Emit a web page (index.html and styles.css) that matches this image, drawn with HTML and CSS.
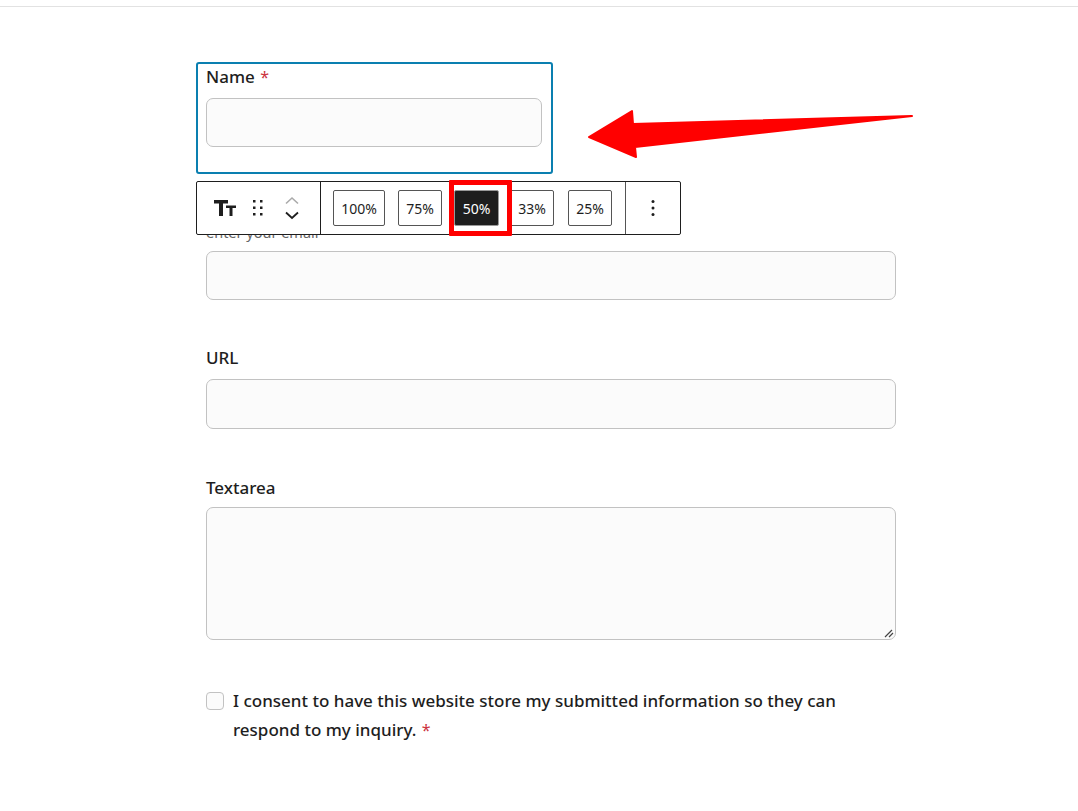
FILE: index.html
```html
<!DOCTYPE html>
<html lang="en">
<head>
    <meta charset="UTF-8">
    <title>Form block</title>
    <link rel="stylesheet" href="styles.css">
</head>
<body>
<div class="top-line"></div>

<div class="form">
    <div class="field field-selected">
        <label class="label">Name <span class="req">*</span></label>
        <div class="input"></div>
    </div>

    <div class="field field-email">
        <div class="hint">enter your email</div>
        <div class="input"></div>
    </div>

    <div class="field field-url">
        <label class="label">URL</label>
        <div class="input input-url"></div>
    </div>

    <div class="field field-textarea">
        <label class="label">Textarea</label>
        <div class="textarea">
            <svg class="grip" width="10" height="10" viewBox="0 0 10 10">
                <path d="M1 9 L8 2 M5 9 L9 5" stroke="#444" stroke-width="1.200" fill="none"/>
            </svg>
        </div>
    </div>

    <div class="consent">
        <span class="checkbox"></span>
        <p class="consent-text">I consent to have this website store my submitted information so they can respond to my inquiry. <span class="req">*</span></p>
    </div>
</div>

<div class="toolbar">
    <div class="tool-group tool-left">
        <svg class="icon-type" width="24" height="20" viewBox="0 0 24 20">
            <path d="M1 2 H15 V5.500 H10 V18 H6 V5.500 H1 Z" fill="#1e1e1e"/>
            <path d="M13 7.500 H23 V10 H19.500 V18 H16.500 V10 H13 Z" fill="#1e1e1e"/>
        </svg>
        <svg class="icon-drag" width="12" height="18" viewBox="0 0 12 18">
            <g fill="#1e1e1e">
                <rect x="1" y="1" width="2.500" height="2.500"/>
                <rect x="8" y="1" width="2.500" height="2.500"/>
                <rect x="1" y="7.500" width="2.500" height="2.500"/>
                <rect x="8" y="7.500" width="2.500" height="2.500"/>
                <rect x="1" y="14" width="2.500" height="2.500"/>
                <rect x="8" y="14" width="2.500" height="2.500"/>
            </g>
        </svg>
        <div class="movers">
            <svg width="16" height="9" viewBox="0 0 16 9"><path d="M2 7.500 L8 2 L14 7.500" stroke="#aaa" stroke-width="1.600" fill="none"/></svg>
            <svg width="16" height="9" viewBox="0 0 16 9"><path d="M2 1.500 L8 7 L14 1.500" stroke="#1e1e1e" stroke-width="1.800" fill="none"/></svg>
        </div>
    </div>
    <div class="tool-group tool-widths">
        <button class="width-btn btn-100">100%</button>
        <button class="width-btn btn-75">75%</button>
        <button class="width-btn btn-50 active">50%</button>
        <button class="width-btn btn-33">33%</button>
        <button class="width-btn btn-25">25%</button>
    </div>
    <div class="tool-group tool-more">
        <svg width="4" height="18" viewBox="0 0 4 18">
            <circle cx="2" cy="2.500" r="1.500" fill="#1e1e1e"/>
            <circle cx="2" cy="9" r="1.500" fill="#1e1e1e"/>
            <circle cx="2" cy="15.500" r="1.500" fill="#1e1e1e"/>
        </svg>
    </div>
</div>

<div class="highlight"></div>

<svg class="arrow" width="330" height="56" viewBox="0 0 330 56">
    <path d="M3 29 L46 3 L47 16 L326 8 L49 39 L50 49 Z" fill="#ff0000" stroke="#ff0000" stroke-width="2" stroke-linejoin="round"/>
</svg>
</body>
</html>
```

FILE: styles.css
```css
* {
    box-sizing: border-box;
}

body {
    margin: 0;
    background: #fff;
    font-family: "Noto Sans", "Open Sans", sans-serif;
    color: #1e1e1e;
    height: 811px;
    overflow: hidden;
}

.top-line {
    height: 7px;
    border-bottom: 1px solid #e2e2e2;
}

.form {
    width: 690px;
    margin-left: 206px;
    padding-top: 55px;
}

.label {
    display: block;
    font-size: 17px;
    font-weight: 500;
    line-height: 24px;
    margin-bottom: 9px;
}

.req {
    color: #cc3340;
    font-weight: 400;
    font-size: 16px;
    margin-left: 1px;
}

.input {
    height: 49px;
    background: #fbfbfb;
    border: 1px solid #c2c2c2;
    border-radius: 7px;
}

.input-url {
    height: 50px;
}

.field-selected {
    width: 357px;
    height: 112px;
    margin-left: -10px;
    padding: 1px 9px 1px 8px;
    border: 2px solid #0a7fb0;
    border-radius: 3px;
}

.field-email {
    margin-top: 48px;
}

.hint {
    font-size: 14.500px;
    line-height: 20px;
    color: #666;
    margin-bottom: 9px;
}

.field-url {
    margin-top: 46px;
}

.field-textarea {
    margin-top: 47px;
}

.field-textarea .label {
    margin-bottom: 7px;
}

.textarea {
    position: relative;
    height: 133px;
    background: #fbfbfb;
    border: 1px solid #c2c2c2;
    border-radius: 7px;
}

.grip {
    position: absolute;
    right: 1px;
    bottom: 1px;
}

.consent {
    display: flex;
    margin-top: 46px;
    gap: 9px;
}

.checkbox {
    flex: none;
    width: 18px;
    height: 18px;
    margin-top: 6px;
    background: #fbfbfb;
    border: 1px solid #c2c2c2;
    border-radius: 4px;
}

.consent-text {
    margin: 0;
    font-size: 17px;
    font-weight: 500;
    line-height: 29px;
    width: 640px;
}

/* block toolbar, floats over the form */
.toolbar {
    position: absolute;
    left: 196px;
    top: 181px;
    width: 485px;
    height: 54px;
    display: flex;
    background: #fff;
    border: 1px solid #1e1e1e;
    border-radius: 2px;
}

.tool-group {
    display: flex;
    align-items: center;
    height: 100%;
}

.tool-left {
    width: 124px;
    flex: none;
    border-right: 1px solid #1e1e1e;
    padding-left: 16px;
}

.icon-drag {
    margin-left: 15px;
}

.movers {
    display: flex;
    flex-direction: column;
    gap: 6px;
    margin-left: 20px;
}

.tool-widths {
    width: 305px;
    flex: none;
    border-right: 1px solid #555;
    padding-left: 12px;
}

.width-btn {
    height: 36px;
    padding: 0;
    background: #fff;
    color: #1e1e1e;
    border: 1px solid #555;
    border-radius: 2px;
    font-family: inherit;
    font-size: 14px;
}

.btn-100 {
    width: 52px;
}

.btn-75 {
    width: 44px;
    margin-left: 13px;
}

.btn-50 {
    width: 45px;
    margin-left: 12px;
}

.btn-33 {
    width: 44px;
    margin-left: 11px;
}

.btn-25 {
    width: 44px;
    margin-left: 14px;
}

.width-btn.active {
    background: #1e1e1e;
    color: #fff;
    border-color: #999;
}

.tool-more {
    flex: 1;
    justify-content: center;
}

.highlight {
    position: absolute;
    left: 449px;
    top: 180px;
    width: 63px;
    height: 56px;
    border: 5px solid #ff0000;
    border-radius: 1px;
}

.arrow {
    position: absolute;
    left: 586px;
    top: 108px;
}
```
